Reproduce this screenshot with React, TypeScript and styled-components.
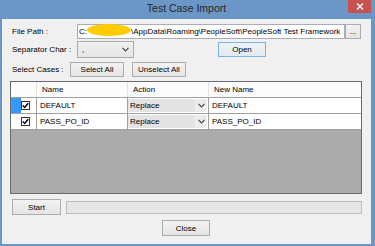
import styled, { createGlobalStyle } from "styled-components";

const GlobalStyle = createGlobalStyle`
  html, body {
    margin: 0;
    padding: 0;
    background: #6b97c6;
  }

  body {
    font-family: "Liberation Sans", Arial, sans-serif;
    font-size: 8px;
    color: #000;
  }
`;

const Window = styled.div`
  width: 375px;
  height: 246px;
  box-sizing: border-box;
  padding: 0 4px 2px 2px;
  background: #6b97c6;
  display: flex;
  flex-direction: column;
`;

const TitleBar = styled.div`
  height: 19px;
  flex-shrink: 0;
  display: grid;
  grid-template-columns: 1fr auto 1fr;
  align-items: start;
`;

const Title = styled.div`
  grid-column: 2;
  font-size: 10.5px;
  line-height: 17px;
  color: #262626;
  white-space: nowrap;
`;

const CloseBox = styled.div`
  grid-column: 3;
  justify-self: end;
  width: 23px;
  height: 13px;
  background: #c75050;
  display: flex;
  align-items: center;
  justify-content: center;
`;

const Client = styled.div`
  flex: 1;
  background: #f0f0f0;
  padding: 0 9px 0 8px;
  display: flex;
  flex-direction: column;
`;

const FormRow = styled.div<{ $top: number; $h: number; $center?: boolean; $indent?: number }>`
  display: flex;
  align-items: center;
  justify-content: ${(p) => (p.$center ? "center" : "flex-start")};
  margin-top: ${(p) => p.$top}px;
  height: ${(p) => p.$h}px;
  padding-left: ${(p) => p.$indent ?? 0}px;
  flex-shrink: 0;
`;

const Label = styled.div<{ $w: number }>`
  width: ${(p) => p.$w}px;
  flex-shrink: 0;
  box-sizing: border-box;
  padding-left: 2px;
  white-space: nowrap;
`;

const TextBox = styled.div`
  width: 268px;
  height: 15px;
  box-sizing: border-box;
  border: 1px solid #abadb3;
  background: #fff;
  padding-left: 1px;
  display: flex;
  align-items: center;
  white-space: nowrap;
`;

const Redact = styled.span`
  display: inline-block;
  width: 44px;
  height: 12px;
  border-radius: 50%;
  background: #ffcc00;
  transform: translateY(-2px);
`;

const Button = styled.button<{ $w: number; $h?: number; $default?: boolean; $ml?: number }>`
  width: ${(p) => p.$w}px;
  height: ${(p) => p.$h ?? 15}px;
  margin-left: ${(p) => p.$ml ?? 0}px;
  flex-shrink: 0;
  box-sizing: border-box;
  padding: 0;
  border: 1px solid ${(p) => (p.$default ? "#7ab2e6" : "#adadad")};
  background: ${(p) =>
    p.$default
      ? "linear-gradient(#eef2f7, #e3e9f0)"
      : "linear-gradient(#f2f2f2, #e4e4e4)"};
  font-family: inherit;
  font-size: 8px;
  color: #000;
  display: flex;
  align-items: center;
  justify-content: center;
`;

const Combo = styled.div`
  width: 57px;
  height: 17px;
  flex-shrink: 0;
  box-sizing: border-box;
  border: 1px solid #acacac;
  background: linear-gradient(#f0f0f0, #e5e5e5);
  display: flex;
  align-items: center;
  justify-content: space-between;
  padding: 0 4px;
`;

const Grid = styled.div`
  margin-top: 4px;
  height: 113px;
  flex-shrink: 0;
  box-sizing: border-box;
  border: 1px solid #6b6b6b;
  background: #ababab;
  display: flex;
  flex-direction: column;
`;

const HeaderRow = styled.div`
  display: grid;
  grid-template-columns: 26px 91px 81px 1fr;
  height: 16px;
  box-sizing: border-box;
  background: #fcfcfc;
  border-bottom: 1px solid #a0a0a0;
`;

const HeaderCell = styled.div`
  padding-left: 5px;
  display: flex;
  align-items: center;
  border-right: 1px solid #e4e4e4;
  &:last-child {
    border-right: none;
  }
`;

const DataRow = styled.div`
  display: grid;
  grid-template-columns: 10px 16px 91px 81px 1fr;
  height: 16px;
  box-sizing: border-box;
  background: #fff;
  border-bottom: 1px solid #a0a0a0;
`;

const Marker = styled.div<{ $selected?: boolean }>`
  background: ${(p) => (p.$selected ? "#3399ff" : "#fff")};
`;

const CheckCell = styled.div`
  display: flex;
  align-items: center;
  border-right: 1px solid #a0a0a0;
`;

const CheckBox = styled.div`
  width: 9px;
  height: 9px;
  box-sizing: border-box;
  border: 1px solid #333;
  background: #fff;
  display: flex;
  align-items: center;
  justify-content: center;
`;

const TextCell = styled.div<{ $pad?: number }>`
  padding-left: ${(p) => p.$pad ?? 3}px;
  display: flex;
  align-items: center;
  border-right: 1px solid #a0a0a0;
  white-space: nowrap;
  &:last-child {
    border-right: none;
  }
`;

const CellCombo = styled.div`
  flex: 1;
  align-self: stretch;
  margin: 1px 1px 1px 0;
  background: #e3e3e3;
  display: flex;
  align-items: center;
  span {
    flex: 1;
    padding-left: 2px;
  }
`;

const CellArrow = styled.div`
  width: 12px;
  align-self: stretch;
  background: #ececec;
  display: flex;
  align-items: center;
  justify-content: center;
`;

const Progress = styled.div`
  flex: 1;
  margin-left: 5px;
  height: 13px;
  box-sizing: border-box;
  border: 1px solid #bcbcbc;
  background: #e6e6e6;
`;

const Chevron = () => (
  <svg width="7" height="5" viewBox="0 0 7 5">
    <polyline points="0.5,0.8 3.5,3.8 6.5,0.8" fill="none" stroke="#444" strokeWidth="1.2" />
  </svg>
);

const Check = () => (
  <svg width="7" height="7" viewBox="0 0 7 7">
    <polyline points="0.8,3.4 2.7,5.4 6.2,1.2" fill="none" stroke="#000" strokeWidth="1.5" />
  </svg>
);

const rows = [
  { name: "DEFAULT", action: "Replace", newName: "DEFAULT", selected: true },
  { name: "PASS_PO_ID", action: "Replace", newName: "PASS_PO_ID", selected: false },
];

export default function App() {
  return (
    <>
      <GlobalStyle />
      <Window>
        <TitleBar>
          <Title>Test Case Import</Title>
          <CloseBox>
            <svg width="8" height="7" viewBox="0 0 8 7">
              <path d="M1 0.5 L7 6.5 M7 0.5 L1 6.5" stroke="#fff" strokeWidth="1.4" />
            </svg>
          </CloseBox>
        </TitleBar>

        <Client>
          <FormRow $top={5} $h={15}>
            <Label $w={67}>File Path :</Label>
            <TextBox>
              C:
              <Redact />
              \AppData\Roaming\PeopleSoft\PeopleSoft Test Framework
            </TextBox>
            <Button $w={16}>...</Button>
          </FormRow>

          <FormRow $top={2} $h={17}>
            <Label $w={67}>Separator Char :</Label>
            <Combo>
              <span>,</span>
              <Chevron />
            </Combo>
            <Button $w={48} $default $ml={84}>
              Open
            </Button>
          </FormRow>

          <FormRow $top={4} $h={15}>
            <Label $w={60}>Select Cases :</Label>
            <Button $w={54}>Select All</Button>
            <Button $w={54} $ml={8}>
              Unselect All
            </Button>
          </FormRow>

          <Grid>
            <HeaderRow>
              <HeaderCell />
              <HeaderCell>Name</HeaderCell>
              <HeaderCell>Action</HeaderCell>
              <HeaderCell>New Name</HeaderCell>
            </HeaderRow>
            {rows.map((r) => (
              <DataRow key={r.name}>
                <Marker $selected={r.selected} />
                <CheckCell>
                  <CheckBox>
                    <Check />
                  </CheckBox>
                </CheckCell>
                <TextCell>{r.name}</TextCell>
                <TextCell $pad={0}>
                  <CellCombo>
                    <span>{r.action}</span>
                    <CellArrow>
                      <Chevron />
                    </CellArrow>
                  </CellCombo>
                </TextCell>
                <TextCell>{r.newName}</TextCell>
              </DataRow>
            ))}
          </Grid>

          <FormRow $top={5} $h={16} $indent={2}>
            <Button $w={49} $h={16}>
              Start
            </Button>
            <Progress />
          </FormRow>

          <FormRow $top={5} $h={16} $center>
            <Button $w={48} $h={16}>
              Close
            </Button>
          </FormRow>
        </Client>
      </Window>
    </>
  );
}
